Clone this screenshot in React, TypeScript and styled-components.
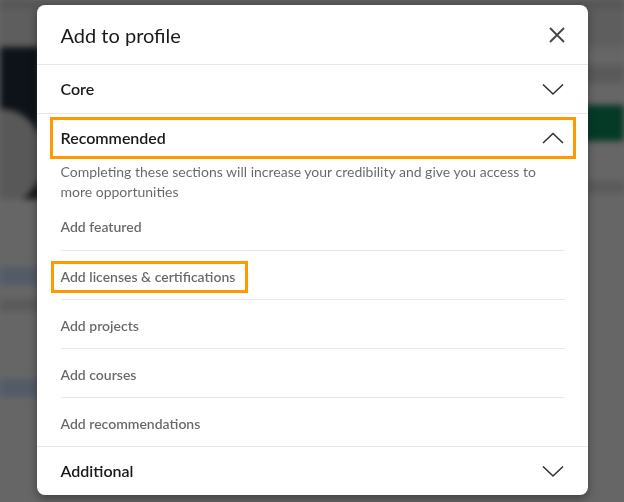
import styled, { createGlobalStyle } from 'styled-components';

// ============================================================================
// Global
// ============================================================================

const GlobalStyle = createGlobalStyle`
  html, body {
    margin: 0;
    padding: 0;
    background: #666666;
    font-family: Lato, "Open Sans", Arial, sans-serif;
  }
  * {
    box-sizing: border-box;
  }
`;

// ============================================================================
// Dimmed page behind the dialog
// ============================================================================

const PageBehind = styled.div`
  position: fixed;
  inset: 0;
  background: #666666;
  filter: blur(3px);
  overflow: hidden;
  display: flex;
  flex-direction: column;
`;

const NavBar = styled.div`
  height: 47px;
  background: #5e5e5e;
  border-top: 8px solid #555555;
`;

const PageBody = styled.div`
  flex: 1;
  display: flex;
  justify-content: space-between;
`;

const LeftColumn = styled.div`
  width: 40px;
  display: flex;
  flex-direction: column;
`;

const RightColumn = styled.div`
  width: 40px;
  display: flex;
  flex-direction: column;
  padding-top: 18px;
`;

const Banner = styled.div`
  position: relative;
  height: 152px;
  background: #0e1319;
  overflow: hidden;
`;

const ProfilePhoto = styled.div`
  position: absolute;
  left: -40px;
  top: 62px;
  width: 84px;
  height: 96px;
  border-radius: 50%;
  background: #585858;
`;

const LinkBlur = styled.div<{ $top: number }>`
  margin-top: ${(p) => p.$top}px;
  height: 18px;
  background: #4f5a67;
  opacity: 0.8;
`;

const TextBlur = styled.div<{ $top: number; $h?: number }>`
  margin-top: ${(p) => p.$top}px;
  height: ${(p) => p.$h ?? 12}px;
  background: #5a5a5a;
`;

const GreenButton = styled.div`
  margin-top: 22px;
  height: 36px;
  background: #053a26;
`;

// ============================================================================
// Dialog
// ============================================================================

const Overlay = styled.div`
  position: fixed;
  inset: 0;
  display: flex;
  justify-content: center;
  align-items: flex-start;
  padding-top: 5px;
`;

const Dialog = styled.div`
  width: 551px;
  background: #ffffff;
  border-radius: 8px;
  box-shadow: 0 4px 10px rgba(0, 0, 0, 0.35);
  overflow: hidden;
`;

const Header = styled.div`
  display: flex;
  align-items: center;
  justify-content: space-between;
  padding: 16px 23px 15px 24px;
  border-bottom: 1px solid #e8e8e8;
`;

const Title = styled.h2`
  margin: 0;
  font-size: 20px;
  line-height: 28px;
  font-weight: 400;
  color: rgba(0, 0, 0, 0.9);
`;

const CloseButton = styled.button`
  width: 16px;
  height: 16px;
  padding: 0;
  border: none;
  background: transparent;
  display: flex;
  align-items: center;
  justify-content: center;
  cursor: pointer;
  color: #444;
`;

const Section = styled.section<{ $last?: boolean }>`
  border-bottom: ${(p) => (p.$last ? 'none' : '1px solid #e8e8e8')};
`;

const SectionHeader = styled.div`
  padding: 3px 12px 3px 13px;
`;

const SectionToggle = styled.button<{ $highlighted?: boolean }>`
  width: 100%;
  display: flex;
  align-items: center;
  justify-content: space-between;
  padding: 6px 8px;
  border: 3px solid ${(p) => (p.$highlighted ? '#ff9900' : 'transparent')};
  background: transparent;
  font-family: inherit;
  cursor: pointer;
`;

const SectionTitle = styled.span`
  font-size: 16px;
  line-height: 24px;
  font-weight: 600;
  color: rgba(0, 0, 0, 0.9);
`;

const Description = styled.p`
  margin: 0 0 1px;
  padding: 0 24px;
  font-size: 14px;
  line-height: 20px;
  color: rgba(0, 0, 0, 0.6);
`;

const ItemList = styled.ul`
  list-style: none;
  margin: 0;
  padding: 0 23px 0 24px;
`;

const Item = styled.li`
  height: 49px;
  padding-top: 3px;
  display: flex;
  align-items: center;
  border-bottom: 1px solid #e8e8e8;

  &:first-child {
    height: 48px;
    padding-top: 0;
  }

  &:last-child {
    height: 48px;
    border-bottom: none;
  }
`;

const ItemLabel = styled.span<{ $highlighted?: boolean }>`
  font-size: 14px;
  line-height: 20px;
  font-weight: 600;
  color: rgba(0, 0, 0, 0.6);
  ${(p) =>
    p.$highlighted &&
    `
    margin-left: -10px;
    padding: 3px 10px 3px 7px;
    border: 3px solid #ff9900;
  `}
`;

// ============================================================================
// Icons
// ============================================================================

function CloseIcon() {
  return (
    <svg width="16" height="16" viewBox="0 0 16 16" aria-hidden="true">
      <path d="M1 1 L15 15 M15 1 L1 15" stroke="currentColor" strokeWidth="1.8" fill="none" />
    </svg>
  );
}

function Chevron({ up }: { up?: boolean }) {
  return (
    <svg width="24" height="24" viewBox="0 0 24 24" aria-hidden="true">
      <path
        d={up ? 'M2 17 L12 7.5 L22 17' : 'M2 7.5 L12 17 L22 7.5'}
        stroke="#333"
        strokeWidth="1.6"
        fill="none"
      />
    </svg>
  );
}

// ============================================================================
// Component
// ============================================================================

const recommended = [
  { label: 'Add featured' },
  { label: 'Add licenses & certifications', highlighted: true },
  { label: 'Add projects' },
  { label: 'Add courses' },
  { label: 'Add recommendations' },
];

export default function App() {
  return (
    <>
      <GlobalStyle />
      <PageBehind>
        <NavBar />
        <PageBody>
          <LeftColumn>
            <Banner>
              <ProfilePhoto />
            </Banner>
            <LinkBlur $top={68} />
            <TextBlur $top={14} />
            <LinkBlur $top={68} />
          </LeftColumn>
          <RightColumn>
            <TextBlur $top={0} $h={18} />
            <GreenButton />
            <TextBlur $top={40} />
          </RightColumn>
        </PageBody>
      </PageBehind>

      <Overlay>
        <Dialog role="dialog" aria-label="Add to profile">
          <Header>
            <Title>Add to profile</Title>
            <CloseButton type="button" aria-label="Dismiss">
              <CloseIcon />
            </CloseButton>
          </Header>

          <Section>
            <SectionHeader>
              <SectionToggle type="button">
                <SectionTitle>Core</SectionTitle>
                <Chevron />
              </SectionToggle>
            </SectionHeader>
          </Section>

          <Section>
            <SectionHeader>
              <SectionToggle type="button" $highlighted>
                <SectionTitle>Recommended</SectionTitle>
                <Chevron up />
              </SectionToggle>
            </SectionHeader>
            <Description>
              Completing these sections will increase your credibility and give you access to
              more opportunities
            </Description>
            <ItemList>
              {recommended.map((item) => (
                <Item key={item.label}>
                  <ItemLabel $highlighted={item.highlighted}>{item.label}</ItemLabel>
                </Item>
              ))}
            </ItemList>
          </Section>

          <Section $last>
            <SectionHeader>
              <SectionToggle type="button">
                <SectionTitle>Additional</SectionTitle>
                <Chevron />
              </SectionToggle>
            </SectionHeader>
          </Section>
        </Dialog>
      </Overlay>
    </>
  );
}
